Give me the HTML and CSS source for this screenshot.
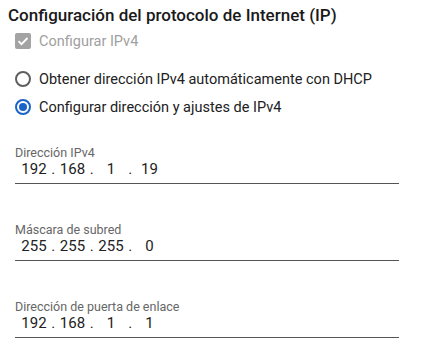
FILE: index.html
```html
<!DOCTYPE html>
<html lang="es">
<head>
<meta charset="UTF-8" />
<meta name="viewport" content="width=device-width, initial-scale=1" />
<title>Configuración IP</title>
<link rel="stylesheet" href="styles.css">
</head>
<body>

<div class="panel">
  <h2>Configuración del protocolo de Internet (IP)</h2>

  <label class="check-row disabled">
    <span class="checkbox">
      <svg viewBox="0 0 16 16" width="16" height="16"><path d="M3.5 8.2l3 3 6-6.2" fill="none" stroke="#fff" stroke-width="1.8"/></svg>
    </span>
    Configurar IPv4
  </label>

  <div class="radio-group">
    <label class="radio-row">
      <span class="radio"></span>
      Obtener dirección IPv4 automáticamente con DHCP
    </label>
    <label class="radio-row">
      <span class="radio checked"></span>
      Configurar dirección y ajustes de IPv4
    </label>
  </div>

  <div class="field">
    <div class="field-label">Dirección IPv4</div>
    <div class="ip">
      <span class="octet">192</span><span class="dot">.</span><span class="octet">168</span><span class="dot">.</span><span class="octet">1</span><span class="dot">.</span><span class="octet">19</span>
    </div>
  </div>

  <div class="field">
    <div class="field-label">Máscara de subred</div>
    <div class="ip">
      <span class="octet">255</span><span class="dot">.</span><span class="octet">255</span><span class="dot">.</span><span class="octet">255</span><span class="dot">.</span><span class="octet">0</span>
    </div>
  </div>

  <div class="field">
    <div class="field-label">Dirección de puerta de enlace</div>
    <div class="ip">
      <span class="octet">192</span><span class="dot">.</span><span class="octet">168</span><span class="dot">.</span><span class="octet">1</span><span class="dot">.</span><span class="octet">1</span>
    </div>
  </div>
</div>

</body>
</html>
```

FILE: styles.css
```css
* {
  box-sizing: border-box;
}
body {
  margin: 0;
  font-family: Roboto, "Liberation Sans", sans-serif;
  background: #fff;
  color: #212121;
}
.panel {
  padding: 3px 8px;
  width: 429px;
}
.panel h2 {
  margin: 0;
  font-size: 17px;
  font-weight: 500;
  line-height: 24px;
  color: #1a1a1a;
}

/* Checkbox */
.check-row {
  display: flex;
  align-items: center;
  height: 28px;
  padding-left: 7px;
  font-size: 14.5px;
}
.check-row.disabled {
  color: #a0a0a0;
}
.checkbox {
  width: 16px;
  height: 16px;
  border-radius: 2px;
  background: #a3a3a3;
  margin-right: 8px;
  display: flex;
}

/* Radios */
.radio-group {
  margin-top: 10px;
}
.radio-row {
  display: flex;
  align-items: center;
  height: 28px;
  padding-left: 7px;
  font-size: 14.5px;
  color: #212121;
}
.radio {
  width: 16px;
  height: 16px;
  border-radius: 50%;
  border: 2px solid #5f5f5f;
  margin-right: 8px;
  display: flex;
  align-items: center;
  justify-content: center;
}
.radio.checked {
  border-color: #1a63c7;
}
.radio.checked::after {
  content: "";
  width: 8px;
  height: 8px;
  border-radius: 50%;
  background: #1a63c7;
}

/* Campos IP */
.field {
  margin: 25px 22px 0 7px;
  padding-bottom: 5px;
  border-bottom: 1px solid #555;
}
.field + .field {
  margin-top: 39px;
}
.field-label {
  font-size: 12.5px;
  line-height: 14px;
  color: #666;
}
.ip {
  display: flex;
  font-size: 15px;
  line-height: 18px;
  color: #222;
  padding-left: 4px;
}
.octet {
  width: 30px;
  text-align: center;
}
.dot {
  width: 8.5px;
  text-align: center;
}
```
